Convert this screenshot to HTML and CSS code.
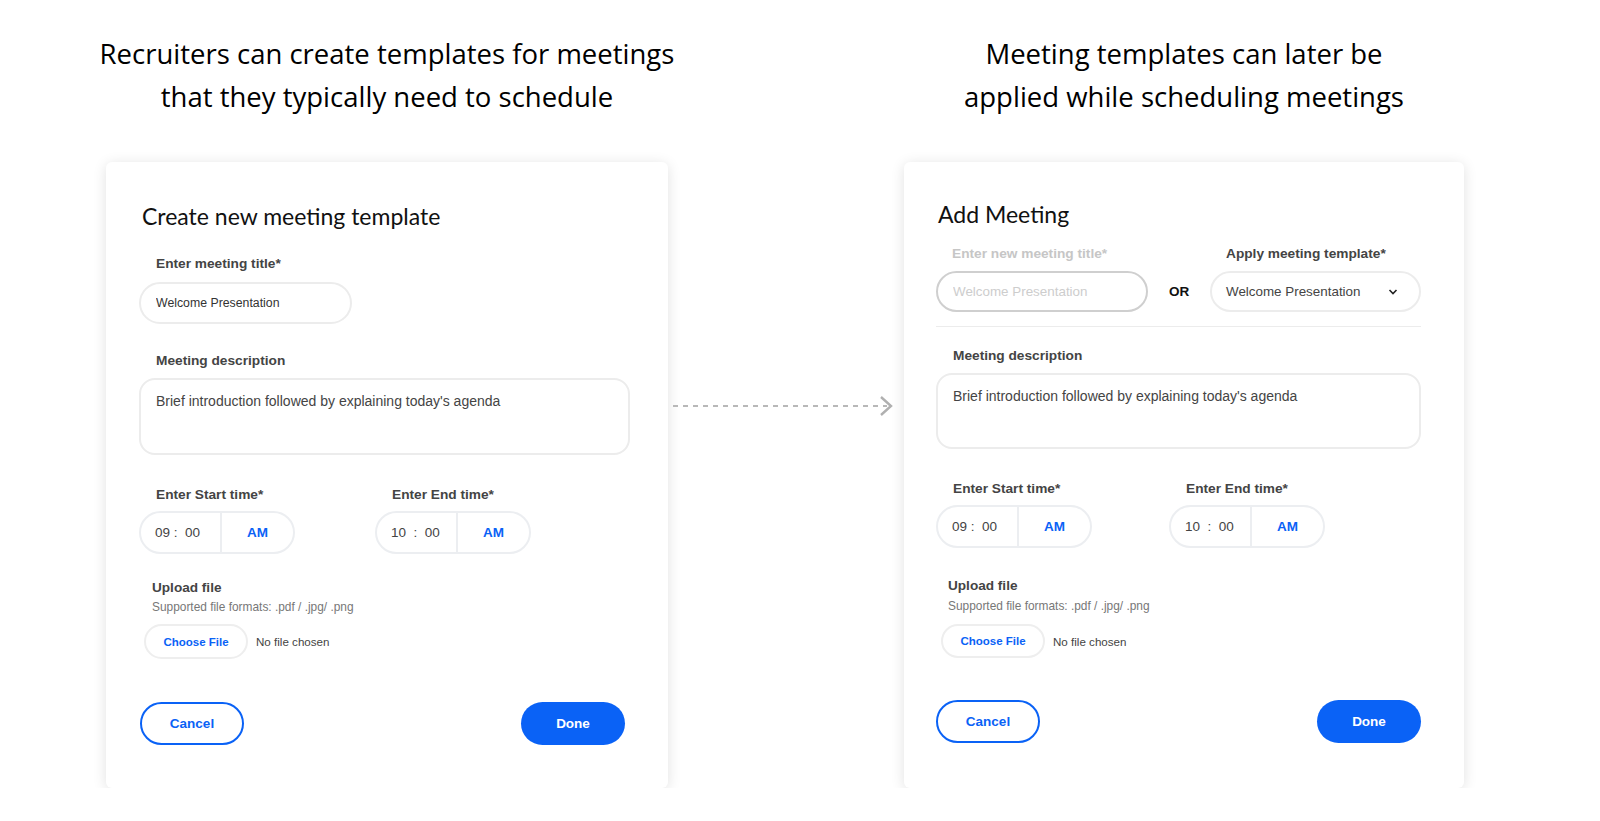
FILE: index.html
```html
<!DOCTYPE html>
<html lang="en">
<head>
    <meta charset="UTF-8">
    <meta name="viewport" content="width=device-width, initial-scale=1.0">
    <title>Meeting Templates</title>
    <link rel="stylesheet" href="styles.css">
</head>
<body>
    <div class="page">
        <section class="panel">
            <h2 class="caption">Recruiters can create templates for meetings<br>that they typically need to schedule</h2>

            <div class="card card-template">
                <h3 class="card-title">Create new meeting template</h3>

                <div class="field">
                    <label class="field-label" for="title1">Enter meeting title*</label>
                    <input class="text-input" type="text" id="title1" value="Welcome Presentation">
                </div>

                <div class="field field-desc">
                    <label class="field-label" for="desc1">Meeting description</label>
                    <textarea class="text-area" id="desc1">Brief introduction followed by explaining today's agenda</textarea>
                </div>

                <div class="time-row">
                    <div class="time-field">
                        <span class="field-label">Enter Start time*</span>
                        <div class="time-picker">
                            <span class="time-value">09 :&nbsp; 00</span>
                            <span class="time-period">AM</span>
                        </div>
                    </div>
                    <div class="time-field">
                        <span class="field-label">Enter End time*</span>
                        <div class="time-picker">
                            <span class="time-value">10 &nbsp;:&nbsp; 00</span>
                            <span class="time-period">AM</span>
                        </div>
                    </div>
                </div>

                <div class="upload">
                    <div class="upload-title">Upload file</div>
                    <div class="upload-hint">Supported file formats: .pdf / .jpg/ .png</div>
                    <div class="file-row">
                        <button class="file-button" type="button">Choose File</button>
                        <span class="file-name">No file chosen</span>
                    </div>
                </div>

                <div class="actions">
                    <button class="btn btn-outline" type="button">Cancel</button>
                    <button class="btn btn-primary" type="button">Done</button>
                </div>
            </div>
        </section>

        <div class="flow-arrow">
            <svg width="236" height="24" viewBox="0 0 236 24">
                <line x1="5" y1="12" x2="219" y2="12" stroke="#b8b8b8" stroke-width="2" stroke-dasharray="5 5"/>
                <polyline points="213,3 223,12 213,21" fill="none" stroke="#b0b0b0" stroke-width="2.4"/>
            </svg>
        </div>

        <section class="panel">
            <h2 class="caption">Meeting templates can later be<br>applied while scheduling meetings</h2>

            <div class="card card-meeting">
                <h3 class="card-title">Add Meeting</h3>

                <div class="template-row">
                    <label class="field-label muted" for="title2">Enter new meeting title*</label>
                    <span></span>
                    <span class="field-label">Apply meeting template*</span>

                    <input class="text-input disabled" type="text" id="title2" placeholder="Welcome Presentation" disabled>
                    <span class="or">OR</span>
                    <div class="select">
                        <span>Welcome Presentation</span>
                        <svg width="10" height="6" viewBox="0 0 10 6">
                            <polyline points="1.5,1 5,4.5 8.5,1" fill="none" stroke="#222" stroke-width="1.6"/>
                        </svg>
                    </div>
                </div>

                <div class="divider"></div>

                <div class="field">
                    <label class="field-label" for="desc2">Meeting description</label>
                    <textarea class="text-area" id="desc2">Brief introduction followed by explaining today's agenda</textarea>
                </div>

                <div class="time-row">
                    <div class="time-field">
                        <span class="field-label">Enter Start time*</span>
                        <div class="time-picker">
                            <span class="time-value">09 :&nbsp; 00</span>
                            <span class="time-period">AM</span>
                        </div>
                    </div>
                    <div class="time-field">
                        <span class="field-label">Enter End time*</span>
                        <div class="time-picker">
                            <span class="time-value">10 &nbsp;:&nbsp; 00</span>
                            <span class="time-period">AM</span>
                        </div>
                    </div>
                </div>

                <div class="upload">
                    <div class="upload-title">Upload file</div>
                    <div class="upload-hint">Supported file formats: .pdf / .jpg/ .png</div>
                    <div class="file-row">
                        <button class="file-button" type="button">Choose File</button>
                        <span class="file-name">No file chosen</span>
                    </div>
                </div>

                <div class="actions">
                    <button class="btn btn-outline" type="button">Cancel</button>
                    <button class="btn btn-primary" type="button">Done</button>
                </div>
            </div>
        </section>
    </div>
</body>
</html>
```

FILE: styles.css
```css
* {
    margin: 0;
    padding: 0;
    box-sizing: border-box;
}

body {
    font-family: 'Liberation Sans', Arial, sans-serif;
    background-color: #fff;
    color: #333;
}

.page {
    display: grid;
    grid-template-columns: 562px 236px 560px;
    padding: 32px 0 0 106px;
}

.panel {
    display: flex;
    flex-direction: column;
}

.caption {
    margin: 0 -40px 44px;
    font-family: 'Open Sans', sans-serif;
    font-size: 27.5px;
    font-weight: 400;
    line-height: 43px;
    text-align: center;
    color: #000;
}

.flow-arrow svg {
    display: block;
    margin-top: 362px;
}

/* cards */

.card {
    height: 626px;
    background-color: white;
    border-radius: 6px;
    box-shadow: 0 2px 14px rgba(0, 0, 0, 0.12);
}

.card-template {
    padding: 39px 38px 0 33px;
}

.card-meeting {
    padding: 37px 43px 0 32px;
}

.card-title {
    margin: 0 0 25px 3px;
    font-family: 'Lato', sans-serif;
    font-size: 23px;
    font-weight: 400;
    line-height: 30px;
    color: #111;
}

.card-meeting .card-title {
    margin: 0 0 17px 2px;
}

.field-label {
    display: block;
    margin: 0 0 9px 17px;
    font-size: 13.7px;
    font-weight: bold;
    line-height: 16px;
    color: #444;
}

.card-template .field:first-of-type .field-label {
    margin-bottom: 10px;
}

.field-label.muted {
    color: #c6c6c6;
}

.field-desc {
    margin-top: 29px;
}

.text-input {
    display: block;
    width: 213px;
    height: 42px;
    padding: 0 15px;
    border: 2px solid #ececec;
    border-radius: 21px;
    background: #fff;
    font-family: 'Liberation Sans', Arial, sans-serif;
    font-size: 12.3px;
    color: #333;
    outline: none;
}

.text-input.disabled {
    width: 212px;
    height: 41px;
    border-color: #cfcfcf;
    font-size: 13.4px;
}

.text-input.disabled::placeholder {
    color: #cdcdcd;
}

.text-area {
    display: block;
    width: 100%;
    height: 77px;
    padding: 13px 15px;
    border: 2px solid #ececec;
    border-radius: 16px;
    font-family: 'Liberation Sans', Arial, sans-serif;
    font-size: 14px;
    line-height: 16px;
    color: #444;
    resize: none;
    outline: none;
}

.card-meeting .text-area {
    height: 76px;
}

/* add meeting top row */

.template-row {
    display: grid;
    grid-template-columns: 212px 1fr 211px;
    align-items: center;
}

.template-row .field-label {
    margin-left: 16px;
}

.or {
    text-align: center;
    font-size: 13.5px;
    font-weight: bold;
    color: #111;
}

.select {
    display: flex;
    align-items: center;
    justify-content: space-between;
    height: 41px;
    padding: 0 21px 0 14px;
    border: 2px solid #ececec;
    border-radius: 21px;
    font-size: 13.4px;
    color: #444;
}

.divider {
    height: 1px;
    margin: 14px 0 21px;
    background-color: #ececec;
}

/* time pickers */

.time-row {
    display: grid;
    grid-template-columns: 236px auto;
    margin-top: 32px;
}

.card-meeting .time-row {
    grid-template-columns: 233px auto;
}

.time-field .field-label {
    margin-bottom: 8px;
}

.time-picker {
    display: flex;
    width: 156px;
    height: 43px;
    border: 2px solid #eceef1;
    border-radius: 22px;
}

.time-value {
    display: flex;
    align-items: center;
    width: 81px;
    padding-left: 14px;
    border-right: 2px solid #eceef1;
    font-size: 13.5px;
    color: #444;
    white-space: nowrap;
}

.time-period {
    display: flex;
    flex: 1;
    align-items: center;
    justify-content: center;
    font-size: 13.5px;
    font-weight: bold;
    color: #0a62f6;
}

/* upload */

.upload {
    margin: 26px 0 0 13px;
}

.card-meeting .upload {
    margin: 30px 0 0 12px;
}

.upload-title {
    font-size: 13.6px;
    font-weight: bold;
    line-height: 16px;
    color: #444;
}

.upload-hint {
    margin-top: 4px;
    font-size: 11.9px;
    line-height: 14px;
    color: #777;
}

.card-meeting .upload-hint {
    margin-top: 5px;
}

.file-row {
    display: flex;
    align-items: center;
    gap: 8px;
    margin: 10px 0 0 -8px;
}

.card-meeting .file-row {
    margin: 11px 0 0 -7px;
}

.file-button {
    width: 104px;
    height: 35px;
    border: 2px solid #eeeeee;
    border-radius: 18px;
    background: #fff;
    font-family: 'Liberation Sans', Arial, sans-serif;
    font-size: 11.5px;
    font-weight: bold;
    color: #0a62f6;
}

.card-meeting .file-button {
    height: 34px;
}

.file-name {
    font-size: 11.6px;
    color: #444;
}

/* buttons */

.actions {
    display: flex;
    justify-content: space-between;
    margin-top: 43px;
    padding-left: 1px;
    padding-right: 5px;
}

.card-meeting .actions {
    margin-top: 42px;
    padding: 0;
}

.btn {
    width: 104px;
    height: 43px;
    border-radius: 22px;
    font-family: 'Liberation Sans', Arial, sans-serif;
    font-size: 13.5px;
    font-weight: bold;
}

.btn-outline {
    border: 2px solid #0a62f6;
    background: #fff;
    color: #0a62f6;
}

.btn-primary {
    border: none;
    background: #0a62f6;
    color: #fff;
}
```
